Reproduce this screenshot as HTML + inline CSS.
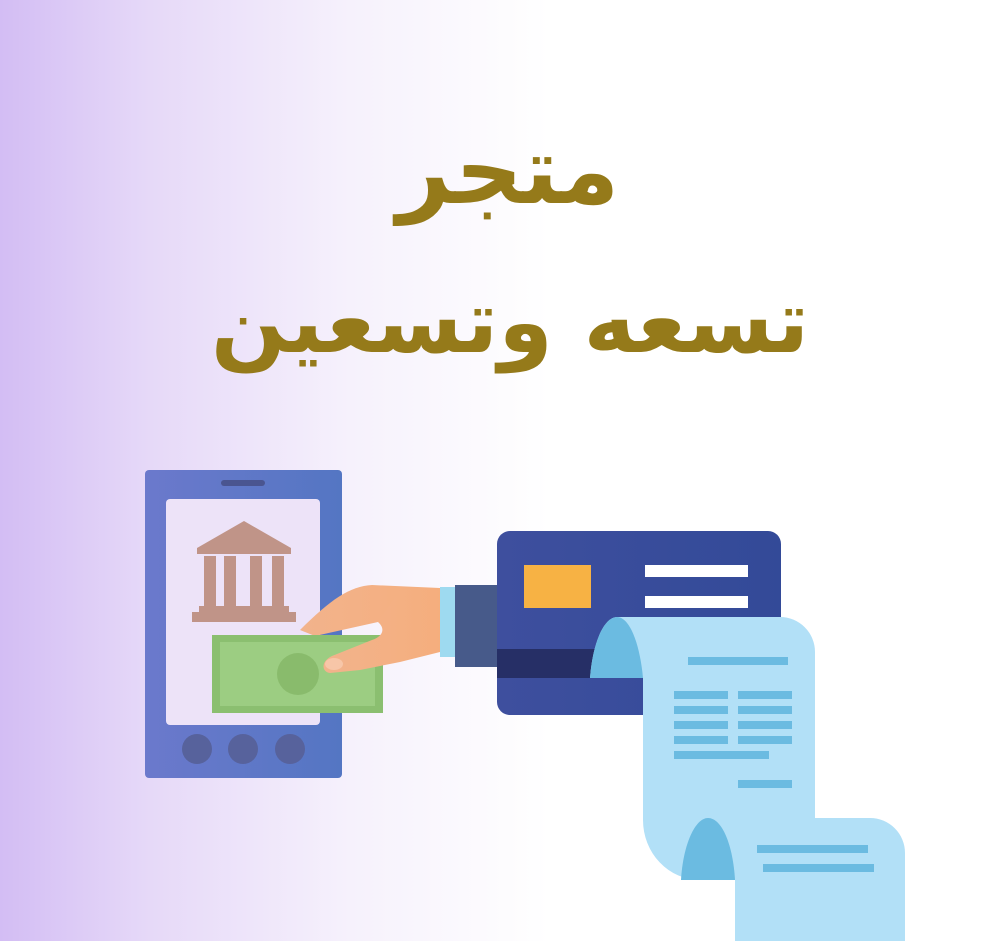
<!DOCTYPE html>
<html><head><meta charset="utf-8"><style>
html,body{margin:0;padding:0}
body{width:1000px;height:941px;overflow:hidden;background:linear-gradient(90deg,#d3bdf4 0%,#e6d9f8 15%,#f6f1fc 35%,#fff 55%,#fff 100%);position:relative}
.t{position:absolute;left:0;width:1000px;text-align:center;color:#957a1a;font-family:"DejaVu Sans","Liberation Sans",sans-serif;font-weight:bold;direction:rtl;white-space:nowrap}
</style></head><body>
<div class="t" style="top:112px;left:8px;font-size:94px;line-height:120px">متجر</div>
<div class="t" style="top:262px;left:10px;font-size:88px;line-height:120px">تسعه وتسعين</div>
<svg width="1000" height="941" style="position:absolute;left:0;top:0">
<defs>
<linearGradient id="ph" x1="0" x2="1"><stop offset="0" stop-color="#6b79cc"/><stop offset="1" stop-color="#5476c3"/></linearGradient>
<linearGradient id="cd" x1="0" x2="1"><stop offset="0" stop-color="#3e4f9e"/><stop offset="1" stop-color="#334a98"/></linearGradient>
<linearGradient id="hd" x1="0" x2="1"><stop offset="0" stop-color="#f2b38c"/><stop offset="1" stop-color="#f5ae7d"/></linearGradient>
</defs>
<rect x="145" y="470" width="197" height="308" rx="4" fill="url(#ph)"/>
<rect x="221" y="480" width="44" height="6" rx="3" fill="#4a5590"/>
<rect x="166" y="499" width="154" height="226" rx="4" fill="#ede3f8"/>
<circle cx="197" cy="749" r="15" fill="#57629c"/>
<circle cx="243" cy="749" r="15" fill="#57629c"/>
<circle cx="290" cy="749" r="15" fill="#57629c"/>
<g fill="#c09488">
<polygon points="244,521 197,548 291,548"/>
<rect x="197" y="548" width="94" height="6"/>
<rect x="204" y="556" width="12" height="50"/><rect x="224" y="556" width="12" height="50"/>
<rect x="250" y="556" width="12" height="50"/><rect x="272" y="556" width="12" height="50"/>
<rect x="199" y="606" width="90" height="6"/><rect x="192" y="612" width="104" height="10"/>
</g>
<path d="M440,588 L372,585 C350,586 330,600 300,630 L315,636 L378,622 Z" fill="url(#hd)"/>
<rect x="212" y="635" width="171" height="78" fill="#8bbf70"/>
<rect x="220" y="642" width="155" height="64" fill="#9ccd82"/>
<circle cx="298" cy="674" r="21" fill="#89bb6c"/>
<path d="M440,588 L400,590 L378,622 C385,628 384,636 372,640 L332,656 C320,662 322,672 330,673 L360,670 L400,662 L440,652 Z" fill="url(#hd)"/>
<ellipse cx="334" cy="664" rx="9" ry="6" fill="#f7c6a8"/>
<rect x="440" y="587" width="16" height="70" fill="#9edaf0"/>
<rect x="455" y="585" width="45" height="82" fill="#475a8a"/>
<rect x="497" y="531" width="284" height="184" rx="13" fill="url(#cd)"/>
<rect x="497" y="649" width="150" height="29" fill="#262f66"/>
<rect x="524" y="565" width="67" height="43" fill="#f7b244"/>
<rect x="645" y="565" width="103" height="12" fill="#fff"/>
<rect x="645" y="596" width="103" height="12" fill="#fff"/>
<path d="M617,617 L780,617 A35,35 0 0 1 815,652 L815,818 L870,818 A35,35 0 0 1 905,853 L905,941 L735,941 L735,880 L700,880 A57,60 0 0 1 643,820 L643,678 L590,678 C593,640 605,617 617,617 Z" fill="#b2e0f7"/>
<path d="M590,678 C593,640 605,617 617,617 C630,617 640,645 643,678 Z" fill="#6bbbe1"/>
<path d="M681,880 C683,845 695,818 708,818 C722,818 733,845 735,880 Z" fill="#6bbbe1"/>
<g fill="#6bbbe1">
<rect x="688" y="657" width="100" height="8"/>
<rect x="674" y="691" width="54" height="8"/><rect x="738" y="691" width="54" height="8"/>
<rect x="674" y="706" width="54" height="8"/><rect x="738" y="706" width="54" height="8"/>
<rect x="674" y="721" width="54" height="8"/><rect x="738" y="721" width="54" height="8"/>
<rect x="674" y="736" width="54" height="8"/><rect x="738" y="736" width="54" height="8"/>
<rect x="674" y="751" width="95" height="8"/>
<rect x="738" y="780" width="54" height="8"/>
<rect x="757" y="845" width="111" height="8"/>
<rect x="763" y="864" width="111" height="8"/>
</g>
</svg>
</body></html>
